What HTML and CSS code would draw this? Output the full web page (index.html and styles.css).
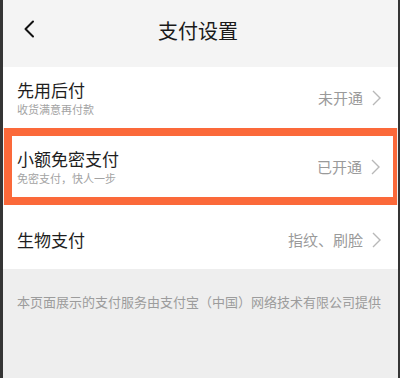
FILE: index.html
```html
<!DOCTYPE html>
<html lang="zh-CN">
<head>
<meta charset="utf-8">
<link rel="stylesheet" href="styles.css">
</head>
<body>
<div class="page">
  <header class="nav">
    <svg class="back" width="12" height="18" viewBox="0 0 12 18"><polyline points="10,1.5 2.5,9 10,16.5" fill="none" stroke="#111" stroke-width="2" stroke-linecap="round" stroke-linejoin="round"/></svg>
    <h1 class="nav-title">支付设置</h1>
  </header>
  <div class="row">
    <div class="info">
      <div class="name">先用后付</div>
      <div class="desc">收货满意再付款</div>
    </div>
    <div class="value">未开通<svg class="arrow" width="9" height="16" viewBox="0 0 9 16"><polyline points="1,1 8,8 1,15" fill="none" stroke="#b8b8b8" stroke-width="1.4"/></svg></div>
  </div>
  <div class="row row-marked">
    <div class="info">
      <div class="name">小额免密支付</div>
      <div class="desc">免密支付，快人一步</div>
    </div>
    <div class="value">已开通<svg class="arrow" width="9" height="16" viewBox="0 0 9 16"><polyline points="1,1 8,8 1,15" fill="none" stroke="#b8b8b8" stroke-width="1.4"/></svg></div>
  </div>
  <div class="row row-single">
    <div class="info">
      <div class="name">生物支付</div>
    </div>
    <div class="value">指纹、刷脸<svg class="arrow" width="9" height="16" viewBox="0 0 9 16"><polyline points="1,1 8,8 1,15" fill="none" stroke="#b8b8b8" stroke-width="1.4"/></svg></div>
  </div>
  <footer class="foot">本页面展示的支付服务由支付宝（中国）网络技术有限公司提供</footer>
</div>
</body>
</html>
```

FILE: styles.css
```css
* { box-sizing: border-box; margin: 0; padding: 0; }
html, body { width: 400px; height: 378px; overflow: hidden; }
body {
  font-family: "Noto Sans CJK SC", "Noto Sans", sans-serif;
  background: #333;
}
.page {
  width: 400px;
  height: 378px;
  border-left: 3px solid #353535;
  border-right: 2px solid #353535;
  background: #eeeeee;
  display: flex;
  flex-direction: column;
}
.nav {
  height: 67px;
  background: #f4f4f4;
  position: relative;
  display: flex;
  align-items: center;
  justify-content: center;
  padding-bottom: 6px;
}
.back {
  position: absolute;
  left: 20px;
  top: 20px;
}
.nav-title {
  font-size: 20px;
  font-weight: 400;
  color: #1a1a1a;
  line-height: 24px;
  margin-left: -5px;
}
.row {
  background: #fff;
  height: 61px;
  display: flex;
  align-items: center;
  justify-content: space-between;
  padding: 0 17px 0 14px;
}
.row-marked {
  height: 77px;
  margin: 0 1px;
  border: 8px solid #fb693a;
  border-right-width: 4px;
  padding: 0 13px 0 5px;
}
.row-single {
  height: 64px;
  padding-top: 5px;
}
.info {
  display: flex;
  flex-direction: column;
  gap: 2px;
}
.name {
  font-size: 17px;
  line-height: 20px;
  color: #1e1e1e;
}
.desc {
  font-size: 11px;
  line-height: 14px;
  color: #a3a3a3;
}
.value {
  display: flex;
  align-items: center;
  gap: 9px;
  font-size: 15px;
  line-height: 20px;
  color: #9a9a9a;
}
.arrow { display: block; }
.foot {
  padding: 24px 0 0 14px;
  font-size: 13px;
  line-height: 18px;
  color: #9c9c9c;
  white-space: nowrap;
}
```
